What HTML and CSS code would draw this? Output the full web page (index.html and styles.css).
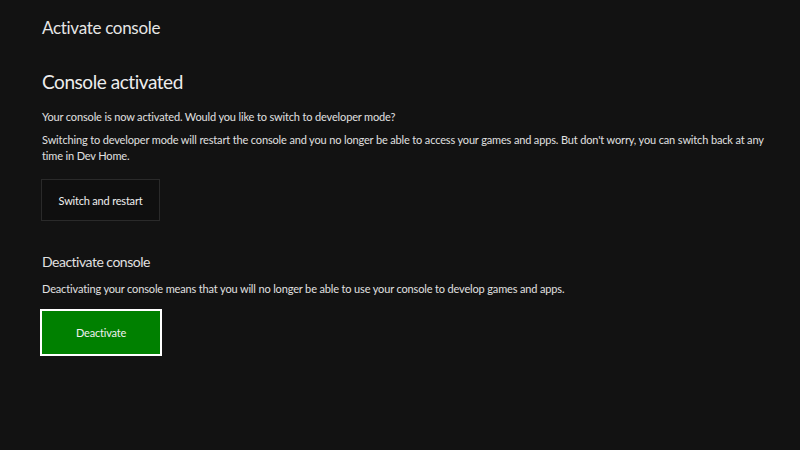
FILE: index.html
```
<!DOCTYPE html>
<html>
<head>
<meta charset="utf-8">
<link rel="stylesheet" href="styles.css">
</head>
<body>
<main class="page">
  <h1 class="page-title">Activate console</h1>
  <section class="activated">
    <h2 class="section-title">Console activated</h2>
    <p class="text first">Your console is now activated. Would you like to switch to developer mode?</p>
    <p class="text">Switching to developer mode will restart the console and you no longer be able to access your games and apps. But don't worry, you can switch back at any time in Dev Home.</p>
    <button class="btn btn-dark">Switch and restart</button>
  </section>
  <section class="deactivate">
    <h3 class="sub-title">Deactivate console</h3>
    <p class="text">Deactivating your console means that you will no longer be able to use your console to develop games and apps.</p>
    <button class="btn btn-green">Deactivate</button>
  </section>
</main>
</body>
</html>
```
FILE: styles.css
```
html, body {
  margin: 0;
  padding: 0;
  background: #121212;
  width: 800px;
  height: 450px;
  overflow: hidden;
}
body {
  font-family: "Lato", "Open Sans", sans-serif;
  color: #e8e8e8;
}
.page {
  padding: 16px 30px 0 42px;
  display: flex;
  flex-direction: column;
}
.page-title {
  margin: 0;
  font-size: 17px;
  font-weight: 400;
  line-height: 24px;
  letter-spacing: -0.3px;
  color: #e6e6e6;
}
.activated {
  margin-top: 29px;
  display: flex;
  flex-direction: column;
  align-items: flex-start;
}
.section-title {
  margin: 0;
  font-size: 19px;
  font-weight: 400;
  line-height: 26px;
  letter-spacing: -0.45px;
  color: #ededed;
}
.text {
  margin: 0;
  font-size: 11px;
  line-height: 16px;
  letter-spacing: -0.15px;
  color: #e0e0e0;
  max-width: 732px;
}
.text.first {
  margin-top: 14px;
  margin-bottom: 7px;
}
.btn {
  font-family: inherit;
  font-size: 11px;
  letter-spacing: -0.2px;
  color: #f0f0f0;
  cursor: pointer;
  box-sizing: border-box;
}
.btn-dark {
  margin-top: 15px;
  margin-left: -1px;
  width: 119px;
  height: 42px;
  background: #0f0f0f;
  border: 1px solid #2a2a2a;
}
.deactivate {
  margin-top: 31px;
  display: flex;
  flex-direction: column;
  align-items: flex-start;
}
.sub-title {
  margin: 0 0 9px;
  font-size: 14px;
  font-weight: 400;
  line-height: 20px;
  letter-spacing: -0.5px;
  color: #e0e0e0;
}
.btn-green {
  margin-top: 12px;
  margin-left: -2px;
  width: 122px;
  height: 47px;
  background: #008000;
  border: 2px solid #ffffff;
}
```
